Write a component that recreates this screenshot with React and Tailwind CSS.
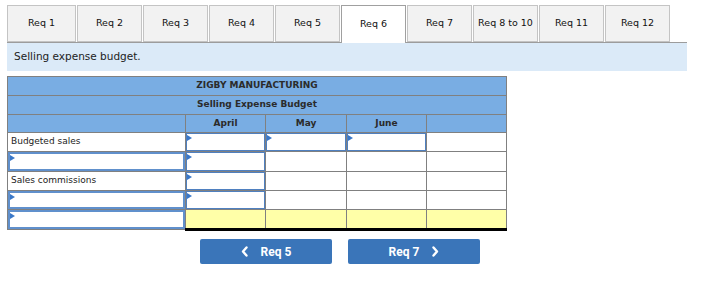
import React from "react";

const TABS = ["Req 1", "Req 2", "Req 3", "Req 4", "Req 5", "Req 6", "Req 7", "Req 8 to 10", "Req 11", "Req 12"];

function Field({ wide }) {
  return (
    <div
      className={
        "absolute inset-0 bg-white " +
        (wide ? "border-2 border-[#6090cc]" : "border border-[#4f80c0]")
      }
    >
      <span className="absolute left-0 top-px h-0 w-0 border-l-[5px] border-y-[3px] border-l-[#3a78c8] border-y-transparent" />
    </div>
  );
}

function Chevron({ dir }) {
  return (
    <svg width="8" height="11" viewBox="0 0 8 11" fill="none" stroke="white" strokeWidth="2.4" strokeLinecap="round" strokeLinejoin="round">
      {dir === "left" ? <path d="M5.5 1.5 L2 5.5 L5.5 9.5" /> : <path d="M2.5 1.5 L6 5.5 L2.5 9.5" />}
    </svg>
  );
}

export default function App() {
  const cell = "border border-[#808080] p-0 relative";
  const head = "border border-[#808080] bg-[#79ade3] text-center font-bold text-[#2b2b2b] p-0";
  const label = "border border-[#808080] p-0 pl-[3px] text-left text-[#222]";
  const total = cell + " bg-[#ffffa8] border-t-black border-b-[3px] border-b-black";

  return (
    <div className="w-[703px] h-[300px] bg-white pl-[7px] pt-[5px]" style={{ fontFamily: '"DejaVu Sans", Verdana, sans-serif' }}>
      <div className="w-[680px]">
        {/* tabs */}
        <div className="flex h-[38px] items-start border-b border-[#9c9c9c]">
          {TABS.map((t, i) =>
            t === "Req 6" ? (
              <div
                key={t}
                className="ml-px flex h-[38px] w-[65px] items-center justify-center border border-b-0 border-[#a0a0a0] bg-white text-[9.5px] text-[#111]"
              >
                {t}
              </div>
            ) : (
              <div
                key={t}
                className={
                  "flex h-[37px] items-center justify-center border border-[#c4c4c4] bg-[#f2f2f2] text-[9.5px] text-[#111] " +
                  (i === 0 ? "w-[69px]" : "ml-px w-[65px]")
                }
              >
                {t}
              </div>
            )
          )}
        </div>

        {/* instruction */}
        <div className="flex h-[28px] items-center bg-[#dbeaf8] pl-[7px] text-[10.5px] text-[#222]">
          Selling expense budget.
        </div>
      </div>

      {/* budget table */}
      <table className="mt-[5px] w-[499px] table-fixed border-collapse border border-[#808080] text-[9px]">
        <colgroup>
          <col className="w-[178px]" />
          <col className="w-[80px]" />
          <col className="w-[81px]" />
          <col className="w-[80px]" />
          <col className="w-[80px]" />
        </colgroup>
        <tbody>
          <tr className="h-[19px]">
            <td colSpan={5} className={head}>ZIGBY MANUFACTURING</td>
          </tr>
          <tr className="h-[19px]">
            <td colSpan={5} className={head}>Selling Expense Budget</td>
          </tr>
          <tr className="h-[18px]">
            <td className={head}></td>
            <td className={head}>April</td>
            <td className={head}>May</td>
            <td className={head}>June</td>
            <td className={head}></td>
          </tr>
          <tr className="h-[19px]">
            <td className={label}>Budgeted sales</td>
            <td className={cell}><Field /></td>
            <td className={cell}><Field /></td>
            <td className={cell}><Field /></td>
            <td className={cell}></td>
          </tr>
          <tr className="h-[20px]">
            <td className={cell}><Field wide /></td>
            <td className={cell}><Field /></td>
            <td className={cell}></td>
            <td className={cell}></td>
            <td className={cell}></td>
          </tr>
          <tr className="h-[19px]">
            <td className={label}>Sales commissions</td>
            <td className={cell + " border-t-black"}><Field /></td>
            <td className={cell + " border-t-black"}></td>
            <td className={cell + " border-t-black"}></td>
            <td className={cell + " border-t-black"}></td>
          </tr>
          <tr className="h-[19px]">
            <td className={cell}><Field wide /></td>
            <td className={cell}><Field /></td>
            <td className={cell}></td>
            <td className={cell}></td>
            <td className={cell}></td>
          </tr>
          <tr className="h-[20px]">
            <td className={cell}><Field wide /></td>
            <td className={total}></td>
            <td className={total}></td>
            <td className={total}></td>
            <td className={total}></td>
          </tr>
        </tbody>
      </table>

      {/* navigation */}
      <div className="ml-[193px] mt-[8px] flex gap-[16px]" style={{ fontFamily: "Roboto, sans-serif" }}>
        <button className="flex h-[25px] w-[132px] items-center justify-center gap-[12px] rounded-[2px] bg-[#3a75b9] text-[12px] font-bold text-white">
          <Chevron dir="left" />
          <span>Req 5</span>
        </button>
        <button className="flex h-[25px] w-[132px] items-center justify-center gap-[12px] rounded-[2px] bg-[#3a75b9] text-[12px] font-bold text-white">
          <span>Req 7</span>
          <Chevron dir="right" />
        </button>
      </div>
    </div>
  );
}
